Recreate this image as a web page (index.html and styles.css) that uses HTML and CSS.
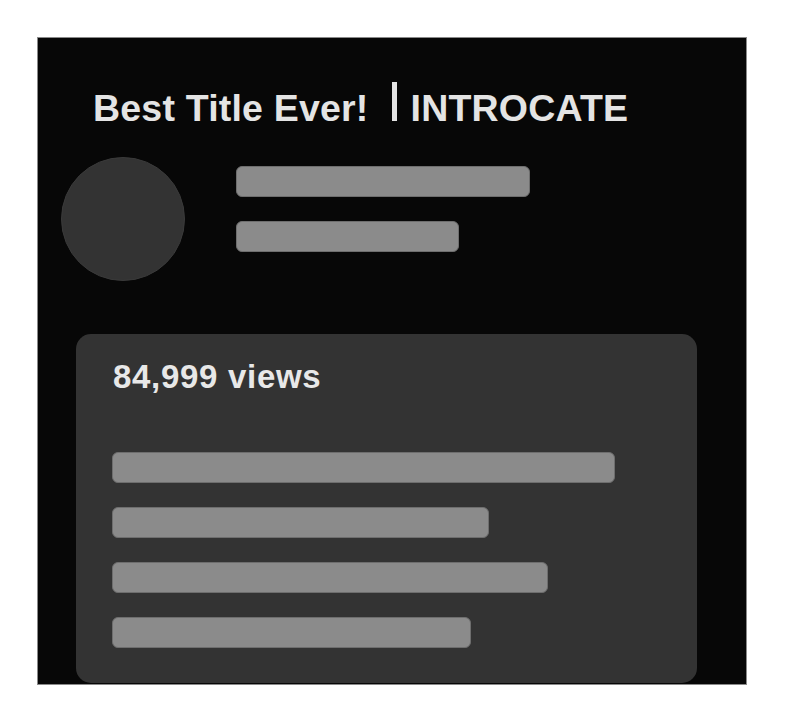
FILE: index.html
```html
<!DOCTYPE html>
<html lang="en">
<head>
<meta charset="utf-8">
<title>Best Title Ever! | INTROCATE</title>
<link rel="stylesheet" href="styles.css">
</head>
<body>
  <div class="frame">
    <h1 class="title">Best Title Ever!<span class="sep"></span>INTROCATE</h1>
    <div class="profile">
      <div class="avatar"></div>
      <div class="lines">
        <div class="bar" style="width:294px"></div>
        <div class="bar" style="width:223px"></div>
      </div>
    </div>
    <div class="card">
      <div class="views">84,999 views</div>
      <div class="card-lines">
        <div class="bar" style="width:503px"></div>
        <div class="bar" style="width:377px"></div>
        <div class="bar" style="width:436px"></div>
        <div class="bar" style="width:359px"></div>
      </div>
    </div>
  </div>
</body>
</html>
```

FILE: styles.css
```css
html, body {
  margin: 0;
  padding: 0;
  background: #ffffff;
}

body {
  font-family: "Liberation Sans", Arial, sans-serif;
}

.frame {
  box-sizing: border-box;
  margin: 37px 0 0 37px;
  width: 710px;
  height: 648px;
  background: #070707;
  border: 1px solid #8a8a8a;
  overflow: hidden;
  display: flex;
  flex-direction: column;
}

.title {
  margin: 44px 0 0 55px;
  font-size: 37.5px;
  line-height: 42px;
  font-weight: 700;
  letter-spacing: 0.2px;
  color: #e4e4e4;
  white-space: nowrap;
}

.sep {
  display: inline-block;
  width: 5px;
  height: 39px;
  background: #e4e4e4;
  margin: 0 14px 0 23px;
  vertical-align: baseline;
}

.profile {
  display: flex;
  align-items: flex-start;
  gap: 51px;
  margin: 28px 0 0 23px;
}

.avatar {
  box-sizing: border-box;
  width: 124px;
  height: 124px;
  border-radius: 50%;
  background: #333333;
  border: 1px solid #3a3a3a;
}

.lines {
  display: flex;
  flex-direction: column;
  gap: 24px;
  padding-top: 9px;
}

.bar {
  box-sizing: border-box;
  height: 31px;
  background: #8b8b8b;
  border: 1px solid #6e6e6e;
  border-radius: 6px;
}

.card {
  box-sizing: border-box;
  margin: 53px 0 0 38px;
  width: 621px;
  height: 349px;
  flex-shrink: 0;
  background: #333333;
  border-radius: 15px;
  padding: 23px 0 0 36px;
}

.views {
  font-size: 33px;
  line-height: 40px;
  font-weight: 700;
  letter-spacing: 0.7px;
  color: #e8e8e8;
  padding-left: 1px;
}

.card-lines {
  display: flex;
  flex-direction: column;
  gap: 24px;
  margin-top: 55px;
}
```
